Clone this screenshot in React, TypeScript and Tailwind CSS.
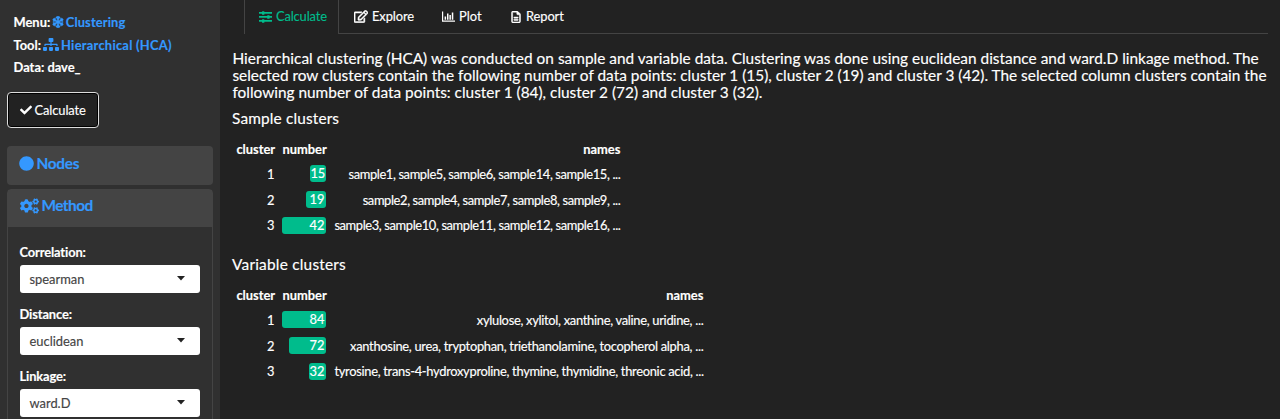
import { FaCheck, FaCircle, FaCogs, FaRegEdit, FaSitemap, FaSnowflake } from "react-icons/fa";
import { FaRegFileLines } from "react-icons/fa6";
import type { ReactNode } from "react";

type Row = { id: number; count: number; bar: number; names: string };

const samples: Row[] = [
  { id: 1, count: 15, bar: 16, names: "sample1, sample5, sample6, sample14, sample15, ..." },
  { id: 2, count: 19, bar: 20, names: "sample2, sample4, sample7, sample8, sample9, ..." },
  { id: 3, count: 42, bar: 44, names: "sample3, sample10, sample11, sample12, sample16, ..." },
];

const variables: Row[] = [
  { id: 1, count: 84, bar: 44, names: "xylulose, xylitol, xanthine, valine, uridine, ..." },
  { id: 2, count: 72, bar: 37, names: "xanthosine, urea, tryptophan, triethanolamine, tocopherol alpha, ..." },
  { id: 3, count: 32, bar: 17, names: "tyrosine, trans-4-hydroxyproline, thymine, thymidine, threonic acid, ..." },
];

function SlidersIcon() {
  return (
    <svg viewBox="0 0 13 12" className="h-3 w-[13px]" fill="currentColor">
      <path d="M0 1.1h13v1.7H0zM0 5.1h13v1.7H0zM0 9.1h13v1.7H0z" />
      <rect x="3" y="0.2" width="2.4" height="3.5" rx="0.5" />
      <rect x="8.2" y="4.2" width="2.4" height="3.5" rx="0.5" />
      <rect x="3" y="8.2" width="2.4" height="3.5" rx="0.5" />
    </svg>
  );
}

function BarChartIcon() {
  return (
    <svg viewBox="0 0 13 11" className="h-[11px] w-[13px]" fill="currentColor">
      <path d="M0 0.5h1.2v9.1H13v1.2H0z" />
      <path d="M2.6 5.4h1.5v3.3H2.6zM5 2.4h1.5v6.3H5zM7.4 4h1.5v4.7H7.4zM9.8 1.4h1.5v7.3H9.8z" />
    </svg>
  );
}

function ClusterTable({ rows, width, tracking }: { rows: Row[]; width: string; tracking: string }) {
  return (
    <table className={`${width} table-fixed border-collapse text-right text-[12.9px] leading-[18px]`}>
      <colgroup>
        <col className="w-[46px]" />
        <col className="w-[52px]" />
        <col />
      </colgroup>
      <thead>
        <tr className="h-[26px] font-bold">
          <th className="px-1 pb-0 pt-px">cluster</th>
          <th className="px-1 pb-0 pt-px">number</th>
          <th className="px-1 pb-0 pt-px">names</th>
        </tr>
      </thead>
      <tbody>
        {rows.map((r) => (
          <tr key={r.id} className="h-[25.7px]">
            <td className="px-1 py-0">{r.id}</td>
            <td className="px-1 py-0">
              <span className="ml-auto block h-[17px] rounded-[3px] bg-[#00bc8c] pr-[2px] leading-[17px]" style={{ width: r.bar }}>
                {r.count}
              </span>
            </td>
            <td className={`whitespace-nowrap px-1 py-0 ${tracking}`}>{r.names}</td>
          </tr>
        ))}
      </tbody>
    </table>
  );
}

function SelectField({ label, value }: { label: string; value: string }) {
  return (
    <div className="mb-[13px] h-[49px]">
      <div className="h-[21px] text-[12.9px] font-bold leading-[17px] tracking-[-0.01em]">{label}</div>
      <div className="flex h-7 items-center justify-between rounded-[3px] bg-white pl-[10px] pr-[15px] pt-px text-[12.9px] text-[#444]">
        <span>{value}</span>
        <svg viewBox="0 0 8 5" className="mb-0.5 h-[5px] w-2 fill-[#222]">
          <path d="M0 0h8L4 4.5z" />
        </svg>
      </div>
    </div>
  );
}

function Tab({ icon, children, className }: { icon: ReactNode; children: string; className: string }) {
  return (
    <div className={`flex items-center ${className}`}>
      {icon}
      <span>{children}</span>
    </div>
  );
}

export default function App() {
  return (
    <div className="flex h-[419px] w-[1280px] overflow-hidden bg-[#222] font-['Lato',sans-serif] text-[12.9px] text-white [-webkit-text-stroke:0.15px]">
      <aside className="w-[220px] shrink-0 bg-[#303030] pl-[6.5px] pr-[7.5px] pt-[11px]">
        <div className="pl-[7px] font-bold leading-[22.6px]">
          <div className="flex items-center">
            Menu:
            <FaSnowflake className="ml-[2px] mr-[1.5px] size-3 stroke-[#3498ff] stroke-[20] text-[#3498ff]" />
            <span className="tracking-[0.12px] text-[#3498ff]">Clustering</span>
          </div>
          <div className="flex items-center">
            Tool:
            <FaSitemap className="ml-[2px] mr-[2px] h-[13px] w-4 text-[#3498ff]" />
            <span className="tracking-[0.25px] text-[#3498ff]">Hierarchical (HCA)</span>
          </div>
          <div>Data: dave_</div>
        </div>
        <button className="mt-[13px] flex h-9 w-[92px] items-center rounded-[4px] border border-[#ddd] bg-[#222] pl-3 pt-px shadow-[inset_0_0_0_1px_#000]">
          <FaCheck className="mr-[3px] size-3" />
          <span className="tracking-[-0.1px]">Calculate</span>
        </button>
        <div className="mt-[18px] flex h-[39px] items-center rounded-[4px] bg-[#444] pb-[4px] pl-3 text-[15.4px] font-bold text-[#3498ff]">
          <FaCircle className="mr-[3px] size-[15px]" />
          <span className="tracking-[-0.3px]">Nodes</span>
        </div>
        <div className="mt-1 h-[240px] rounded-[4px] border border-[#444]">
          <div className="flex h-[37px] items-center bg-[#444] pb-[5px] pl-3 text-[15.4px] font-bold text-[#3498ff]">
            <FaCogs className="mr-[3px] h-[16px] w-[19px]" />
            <span className="tracking-[-0.55px]">Method</span>
          </div>
          <div className="px-3 pt-[17px]">
            <SelectField label="Correlation:" value="spearman" />
            <SelectField label="Distance:" value="euclidean" />
            <SelectField label="Linkage:" value="ward.D" />
          </div>
        </div>
      </aside>
      <main className="min-w-0 flex-1 pl-3">
        <nav className="flex h-[34px] w-[1036px]">
          <div className="w-3" />
          <Tab className="w-[95px] gap-[4px] border-x border-[#444] pl-[14px] tracking-[-0.15px] text-[#00bc8c]" icon={<SlidersIcon />}>Calculate</Tab>
          <div className="flex flex-1 border-b border-[#444]">
            <Tab className="w-[88px] gap-1 pl-[15px] tracking-[-0.1px]" icon={<FaRegEdit className="h-[13px] w-[14px] stroke-white stroke-[20]" />}>Explore</Tab>
            <Tab className="w-[69px] gap-1 pl-[15px]" icon={<BarChartIcon />}>Plot</Tab>
            <Tab className="w-[90px] gap-[5px] pl-[15px] tracking-[-0.1px]" icon={<FaRegFileLines className="h-3 w-[10px] stroke-white stroke-[20]" />}>Report</Tab>
          </div>
        </nav>
        <p className="mt-4 whitespace-nowrap pl-[0.4px] text-[15.4px] leading-[17px]">
          <span className="tracking-[0.016px]">Hierarchical clustering (HCA) was conducted on sample and variable data. Clustering was done using euclidean distance and ward.D linkage method. The</span>
          <br />
          selected row clusters contain the following number of data points: cluster 1 (15), cluster 2 (19) and cluster 3 (42). The selected column clusters contain the
          <br />
          following number of data points: cluster 1 (84), cluster 2 (72) and cluster 3 (32).
        </p>
        <h4 className="mt-[9px] text-[15.4px] leading-[17px] tracking-[0.15px]">Sample clusters</h4>
        <div className="mt-2 pl-[0.4px]">
          <ClusterTable rows={samples} width="w-[392px]" tracking="tracking-[-0.38px]" />
        </div>
        <h4 className="mt-[18px] text-[15.4px] leading-[17px] tracking-[0.22px]">Variable clusters</h4>
        <div className="mt-2 pl-[0.4px]">
          <ClusterTable rows={variables} width="w-[475px]" tracking="tracking-[-0.3px]" />
        </div>
      </main>
    </div>
  );
}
